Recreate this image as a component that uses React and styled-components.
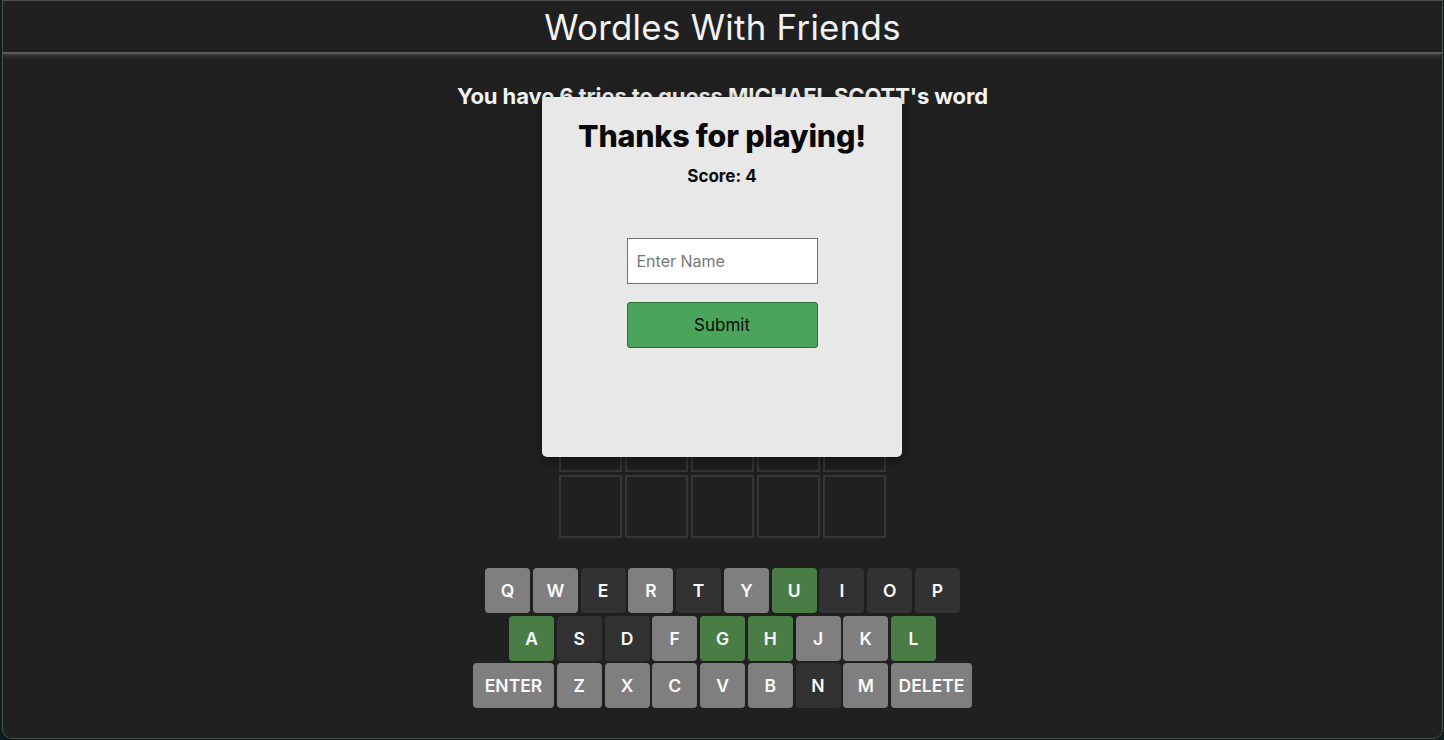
import styled, { createGlobalStyle } from 'styled-components';

const GlobalStyle = createGlobalStyle`
  html, body {
    margin: 0;
    padding: 0;
    background: #0d1d20;
  }
  body {
    font-family: Inter, "Noto Sans", "DejaVu Sans", sans-serif;
  }
`;

const Frame = styled.div`
  box-sizing: border-box;
  height: 739px;
  margin: 0 0 1px 2px;
  width: 1441px;
  background: #202020;
  border: 1px solid #4f4f4f;
  border-radius: 0 0 10px 10px;
  position: relative;
  overflow: hidden;
`;

const Header = styled.header`
  height: 51px;
  display: flex;
  align-items: center;
  justify-content: center;
  border-bottom: 2px solid #5a5a5a;
  box-shadow: 0 2px 5px rgba(110, 110, 110, 0.45);
  & h1 {
    margin: 0;
    color: #f2f2f2;
    font-size: 34.8px;
    font-weight: 400;
    letter-spacing: 0.3px;
  }
`;

const Main = styled.main`
  display: flex;
  flex-direction: column;
  align-items: center;
  padding-top: 30px;
`;

const Tries = styled.h2`
  margin: 0;
  color: #f4f4f4;
  font-size: 22px;
  font-weight: 700;
  line-height: 24px;
  letter-spacing: -0.1px;
`;

const Board = styled.div`
  margin-top: 37px;
  display: grid;
  grid-template-columns: repeat(5, 63px);
  grid-auto-rows: 63px;
  gap: 3px;
`;

const Tile = styled.div`
  box-sizing: border-box;
  border: 2px solid #363636;
`;

const Keyboard = styled.div`
  margin-top: 30px;
  display: flex;
  flex-direction: column;
  align-items: center;
  gap: 2.5px;
`;

const KeyRow = styled.div`
  display: flex;
  gap: 2.75px;
`;

const keyColors = {
  unused: '#7f7f80',
  absent: '#323232',
  correct: '#4a7d46',
};

const Key = styled.div`
  width: ${(p) => (p.$wide ? '81px' : '45px')};
  height: 45px;
  border-radius: 4px;
  background: ${(p) => keyColors[p.$state]};
  color: #fafafa;
  display: flex;
  align-items: center;
  justify-content: center;
  font-size: 17.5px;
  font-weight: 600;
`;

const Modal = styled.div`
  position: absolute;
  left: 539px;
  top: 96px;
  width: 360px;
  height: 360px;
  box-sizing: border-box;
  background: #e8e8e8;
  border-radius: 5px;
  box-shadow: 0 4px 14px rgba(0, 0, 0, 0.45);
  display: flex;
  flex-direction: column;
  align-items: center;
  padding-top: 21px;
  & h2 {
    margin: 0;
    font-size: 30.4px;
    font-weight: 800;
    color: #0a0a0a;
    line-height: 36px;
    letter-spacing: -0.2px;
  }
  & p {
    margin: 11px 0 0;
    font-size: 17px;
    font-weight: 700;
    color: #0a0a0a;
    line-height: 22px;
  }
`;

const NameInput = styled.input`
  box-sizing: border-box;
  margin-top: 51px;
  width: 191px;
  height: 46px;
  border: 1px solid #6e6e6e;
  background: #fff;
  padding: 0 9px;
  font-family: inherit;
  font-size: 16px;
  color: #222;
  outline: none;
  &::placeholder {
    color: #777;
  }
`;

const SubmitButton = styled.button`
  box-sizing: border-box;
  margin-top: 18px;
  width: 191px;
  height: 46px;
  background: #4aa55b;
  border: 1px solid #2f6e3a;
  border-radius: 3px;
  font-family: inherit;
  font-size: 17px;
  color: #0a0a0a;
`;

const rows = [
  [['Q', 'unused'], ['W', 'unused'], ['E', 'absent'], ['R', 'unused'], ['T', 'absent'], ['Y', 'unused'], ['U', 'correct'], ['I', 'absent'], ['O', 'absent'], ['P', 'absent']],
  [['A', 'correct'], ['S', 'absent'], ['D', 'absent'], ['F', 'unused'], ['G', 'correct'], ['H', 'correct'], ['J', 'unused'], ['K', 'unused'], ['L', 'correct']],
  [['ENTER', 'unused'], ['Z', 'unused'], ['X', 'unused'], ['C', 'unused'], ['V', 'unused'], ['B', 'unused'], ['N', 'absent'], ['M', 'unused'], ['DELETE', 'unused']],
];

export default function App() {
  return (
    <>
      <GlobalStyle />
      <Frame>
        <Header>
          <h1>Wordles With Friends</h1>
        </Header>
        <Main>
          <Tries>You have 6 tries to guess MICHAEL SCOTT's word</Tries>
          <Board>
            {Array.from({ length: 30 }).map((_, i) => (
              <Tile key={i} />
            ))}
          </Board>
          <Keyboard>
            {rows.map((row, r) => (
              <KeyRow key={r}>
                {row.map(([label, state]) => (
                  <Key key={label} $state={state} $wide={label.length > 1}>
                    {label}
                  </Key>
                ))}
              </KeyRow>
            ))}
          </Keyboard>
        </Main>
        <Modal>
          <h2>Thanks for playing!</h2>
          <p>Score: 4</p>
          <NameInput placeholder="Enter Name" />
          <SubmitButton>Submit</SubmitButton>
        </Modal>
      </Frame>
    </>
  );
}
